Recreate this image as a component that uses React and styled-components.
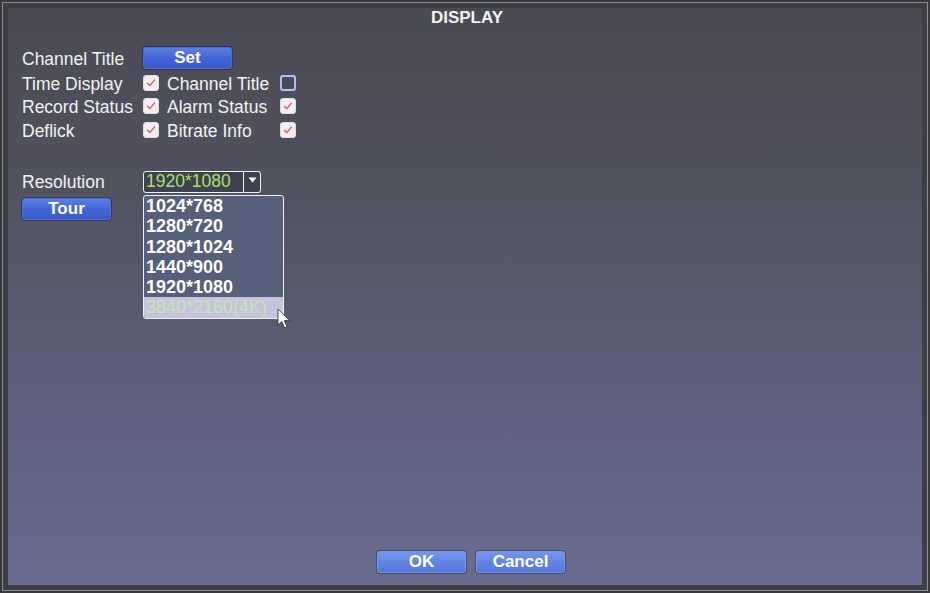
import styled, { createGlobalStyle } from "styled-components";

const GlobalStyle = createGlobalStyle`
    html, body {
        margin: 0;
        padding: 0;
        background: #3c3c42;
    }
    body {
        font-family: "Liberation Sans", Arial, sans-serif;
    }
`

const Frame = styled.div`
    width: 930px;
    height: 593px;
    box-sizing: border-box;
    padding: 2px;
    background: #38383d;
`

const Border = styled.div`
    height: 100%;
    box-sizing: border-box;
    border: 1px solid #8e8e96;
    padding: 5px;
    background: #3e3e45;
`

const Panel = styled.div`
    height: 100%;
    display: flex;
    flex-direction: column;
    background: linear-gradient(180deg, #4a4a53 0%, #51525f 30%, #5d5f7a 65%, #6a6c91 100%);
    color: #f2f2f4;
    position: relative;
`

const Title = styled.div`
    height: 19px;
    line-height: 19px;
    text-align: center;
    font-weight: bold;
    font-size: 17px;
    padding-left: 4px;
`

const Content = styled.div`
    flex: 1;
    padding: 18px 0 0 14px;
`

const Grid = styled.div`
    display: grid;
    grid-template-columns: 121px 24px 113px 24px;
    grid-template-rows: 27px 23.5px 23.5px 23.5px;
    align-items: center;
`

const Label = styled.span`
    font-size: 17.5px;
    line-height: 20px;
    white-space: nowrap;
`

const Button = styled.button`
    width: ${p => p.$w || 89}px;
    height: 22px;
    padding: 0;
    border: 1px solid ${p => p.$light ? "#7a98e6" : "#4c6bd4"};
    border-radius: 3px;
    background: ${p => p.$light
        ? "linear-gradient(180deg, #7796ec 0%, #6285e6 50%, #5677dc 100%)"
        : "linear-gradient(180deg, #5b7fe4 0%, #4266d8 50%, #3a5bcc 100%)"};
    color: #fff;
    font-family: "Liberation Sans", Arial, sans-serif;
    font-weight: bold;
    font-size: 17px;
    line-height: 20px;
    box-shadow: 0 0 0 1px rgba(20, 20, 40, 0.35);
`

const SetCell = styled.div`
    grid-column: 2 / span 3;
    display: flex;
    align-items: flex-start;
    height: 27px;
    padding-top: 2px;
    box-sizing: border-box;
`

const Box = styled.span`
    width: 16px;
    height: 16px;
    box-sizing: border-box;
    border-radius: 3px;
    display: inline-flex;
    align-items: center;
    justify-content: center;
    margin-top: -2px;
    background: ${p => p.$on ? "#f3eef3" : "#4a4b58"};
    border: ${p => p.$on ? "1px solid #e2dce6" : "2px solid #a9c4f2"};
`

const Check = ({ on }) => (
    <Box $on={on}>
        {on && (
            <svg width="12" height="12" viewBox="0 0 11 11">
                <path d="M2 5.5 L4.5 8 L9 2.5" fill="none" stroke="#cf4a5a" strokeWidth="1.1" />
            </svg>
        )}
    </Box>
)

const ResRow = styled.div`
    display: flex;
    align-items: center;
    margin-top: 28.5px;
    height: 22px;
`

const ResLabel = styled(Label)`
    width: 121px;
`

const SelectWrap = styled.div`
    position: relative;
    display: flex;
    height: 22px;
`

const SelectValue = styled.div`
    width: 101px;
    height: 22px;
    box-sizing: border-box;
    border: 1.5px solid #f0f0f4;
    border-radius: 3px 0 0 3px;
    background: #404150;
    color: #a9e06c;
    font-size: 17.5px;
    line-height: 19px;
    padding-left: 2px;
`

const SelectArrow = styled.div`
    width: 17px;
    height: 22px;
    box-sizing: border-box;
    border: 1.5px solid #f0f0f4;
    border-left: none;
    border-radius: 0 3px 3px 0;
    background: #404150;
    display: flex;
    justify-content: center;
    padding-top: 5px;
`

const Menu = styled.div`
    position: absolute;
    left: 0;
    top: 24px;
    width: 141px;
    box-sizing: border-box;
    border: 1.5px solid #f0f0f4;
    border-radius: 3px;
    background: #56607a;
    overflow: hidden;
    z-index: 2;
`

const Option = styled.div`
    height: 20.3px;
    line-height: 20px;
    font-size: 18px;
    padding-left: 2px;
    color: ${p => p.$active ? "#c9e4b4" : "#ffffff"};
    background: ${p => p.$active ? "#c4c4dc" : "transparent"};
    font-weight: ${p => p.$active ? "normal" : "bold"};
`

const TourRow = styled.div`
    margin-top: 5px;
`

const Cursor = styled.svg`
    position: absolute;
    left: 134px;
    top: 137px;
    z-index: 3;
`

const Footer = styled.div`
    display: flex;
    justify-content: center;
    gap: 10px;
    padding: 0 0 12px 12px;
`

const options = ["1024*768", "1280*720", "1280*1024", "1440*900", "1920*1080", "3840*2160(4K)"];

const rows = [
    ["Time Display", true, "Channel Title", false],
    ["Record Status", true, "Alarm Status", true],
    ["Deflick", true, "Bitrate Info", true],
];

const App = () => {
    return (
        <>
            <GlobalStyle />
            <Frame>
                <Border>
                    <Panel>
                        <Title>DISPLAY</Title>
                        <Content>
                            <Grid>
                                <Label>Channel Title</Label>
                                <SetCell>
                                    <Button>Set</Button>
                                </SetCell>
                                {rows.map(r => [
                                    <Label key={r[0]}>{r[0]}</Label>,
                                    <Check key={r[0] + "c"} on={r[1]} />,
                                    <Label key={r[2]}>{r[2]}</Label>,
                                    <Check key={r[2] + "c"} on={r[3]} />,
                                ])}
                            </Grid>
                            <ResRow>
                                <ResLabel>Resolution</ResLabel>
                                <SelectWrap>
                                    <SelectValue>1920*1080</SelectValue>
                                    <SelectArrow>
                                        <svg width="9" height="6" viewBox="0 0 9 6">
                                            <path d="M0.5 0.5 H8.5 L4.5 5.5 Z" fill="#ffffff" />
                                        </svg>
                                    </SelectArrow>
                                    <Menu>
                                        {options.map((o, i) => (
                                            <Option key={o} $active={i === options.length - 1}>{o}</Option>
                                        ))}
                                    </Menu>
                                    <Cursor width="14" height="22" viewBox="0 0 14 22">
                                        <path d="M1 1 L1 17 L4.8 13.4 L7.6 20 L10 19 L7.3 12.6 L12.4 12.6 Z" fill="#ffffff" stroke="#2a2a30" strokeWidth="0.8" />
                                    </Cursor>
                                </SelectWrap>
                            </ResRow>
                            <TourRow>
                                <Button>Tour</Button>
                            </TourRow>
                        </Content>
                        <Footer>
                            <Button $light>OK</Button>
                            <Button $light>Cancel</Button>
                        </Footer>
                    </Panel>
                </Border>
            </Frame>
        </>
    )
}

export default App;
